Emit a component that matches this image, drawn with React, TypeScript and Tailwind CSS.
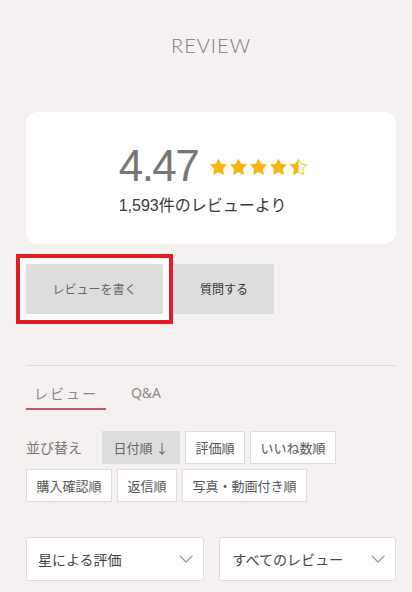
const sortRow = [
  { label: '日付順 ↓', w: 'w-[78px]', active: true },
  { label: '評価順', w: 'w-[60px]' },
  { label: 'いいね数順', w: 'w-[86px]' },
  { label: '購入確認順', w: 'w-[86px]' },
  { label: '返信順', w: 'w-[60px]' },
  { label: '写真・動画付き順', w: 'w-[125px]' },
];

function Star({ half = false }: { half?: boolean }) {
  const d = 'M8.5 0.3L11.03 5.02 16.58 5.87 12.59 9.83 13.5 15.38 8.5 12.8 3.5 15.38 4.41 9.83 0.42 5.87 5.97 5.02z';
  return (
    <svg width="17" height="16" viewBox="0 0 17 16">
      {half ? (
        <>
          <defs>
            <clipPath id="half-left">
              <rect x="0" y="0" width="8.5" height="16" />
            </clipPath>
          </defs>
          <path d={d} fill="none" stroke="#f5b50a" strokeWidth="0.9" strokeLinejoin="round" />
          <path d={d} fill="#f5b50a" clipPath="url(#half-left)" />
        </>
      ) : (
        <path d={d} fill="#f5b50a" strokeLinejoin="round" stroke="#f5b50a" strokeWidth="0.6" />
      )}
    </svg>
  );
}

function Chevron() {
  return (
    <svg width="14" height="8" viewBox="0 0 14 8" fill="none">
      <path d="M1 1l6 6 6-6" stroke="#9a9a9a" strokeWidth="1.2" strokeLinecap="round" strokeLinejoin="round" />
    </svg>
  );
}

export default function App() {
  return (
    <div className="min-h-[592px] w-[412px] bg-[#f6f1f1] font-['Noto_Sans_CJK_JP',sans-serif] text-[#444]">
      <div className="w-[370px] ml-[26px]">
        <h1 className="pt-[31px] h-[59px] text-center text-[20px] leading-[28px] font-light tracking-[1px] text-[#7a7a7a] font-['Lato',sans-serif]">
          REVIEW
        </h1>

        {/* rating summary */}
        <div className="mt-[53px] h-[132px] rounded-[12px] bg-white flex justify-center pt-[32px]">
          <div className="flex flex-col items-start pl-[4px]">
            <div className="flex items-center h-[44px]">
              <span className="text-[44px] leading-[44px] tracking-[-1.5px] text-[#777] font-['Liberation_Sans',sans-serif]">
                4.47
              </span>
              <div className="flex gap-[3px] ml-[12px] mt-[1px]">
                <Star />
                <Star />
                <Star />
                <Star />
                <Star half />
              </div>
            </div>
            <p className="mt-[5px] text-[16px] leading-[22px] text-[#3a3a3a]">
              <span className="font-['Liberation_Sans',sans-serif]">1,593</span>件のレビューより
            </p>
          </div>
        </div>

        {/* actions */}
        <div className="mt-[20px] flex gap-[11px]">
          <button className="relative w-[137px] h-[50px] bg-[#dddddd] text-[12px] text-[#666] shadow-[0_0_0_6px_#ffffff]">
            レビューを書く
            <span className="pointer-events-none absolute -inset-[10px] border-4 border-[#e31b23]" />
          </button>
          <button className="w-[100px] h-[50px] bg-[#dddddd] text-[12px] text-[#333]">質問する</button>
        </div>

        <div className="mt-[51px] border-t border-[#dedada]" />

        {/* tabs */}
        <div className="flex">
          <div className="w-[80px] pt-[17px] pb-[5px] text-center text-[14px] leading-[20px] text-[#8a8a8a] border-b-2 border-[#c4566c] tracking-[2px]">
            レビュー
          </div>
          <div className="w-[80px] pt-[17px] pb-[5px] text-center text-[14px] leading-[20px] text-[#8a8a8a] font-['Noto_Sans',sans-serif]">
            Q&amp;A
          </div>
        </div>

        {/* sort */}
        <div className="mt-[21px] flex flex-wrap gap-x-[5px] gap-y-[5px]">
          <span className="w-[71px] h-[33px] flex items-center text-[14px] text-[#777]">並び替え</span>
          {sortRow.map((s) => (
            <button
              key={s.label}
              className={`${s.w} h-[33px] flex items-center justify-center text-[13px] border ${
                s.active ? 'bg-[#dddddd] border-[#dddddd] text-[#666]' : 'bg-white border-[#e0dcdc] text-[#555]'
              }`}
            >
              {s.label}
            </button>
          ))}
        </div>

        {/* filters */}
        <div className="mt-[35px] grid grid-cols-2 gap-[15px]">
          <div className="h-[44px] rounded-[3px] border border-[#dcdcdc] bg-white pl-[11px] pr-[10px] flex items-center justify-between">
            <span className="text-[14px] text-[#444]">星による評価</span>
            <Chevron />
          </div>
          <div className="h-[44px] rounded-[3px] border border-[#dcdcdc] bg-white pl-[13px] pr-[10px] flex items-center justify-between">
            <span className="text-[14px] text-[#444]">すべてのレビュー</span>
            <Chevron />
          </div>
        </div>
      </div>
    </div>
  );
}
